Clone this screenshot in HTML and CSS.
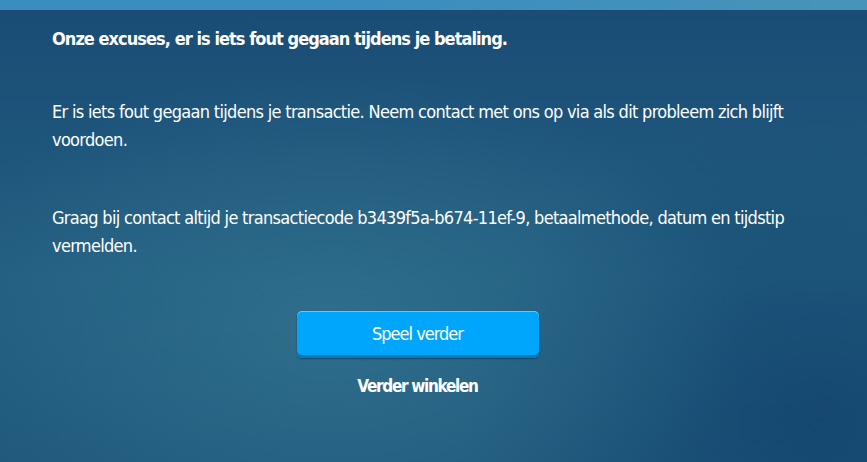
FILE: index.html
```html
<!DOCTYPE html>
<html lang="nl">
<head>
    <meta charset="UTF-8">
    <title>Betaling mislukt</title>
    <link rel="stylesheet" href="styles.css">
</head>
<body>
<div class="page">
    <div class="top-bar"></div>
    <div class="content">
        <h1 class="title">Onze excuses, er is iets fout gegaan tijdens je betaling.</h1>
        <p class="text">Er is iets fout gegaan tijdens je transactie. Neem contact met ons op via als dit probleem zich blijft voordoen.</p>
        <p class="text">Graag bij contact altijd je transactiecode b3439f5a-b674-11ef-9, betaalmethode, datum en tijdstip vermelden.</p>
        <div class="actions">
            <button class="btn-play">Speel verder</button>
            <a class="link-shop" href="#">Verder winkelen</a>
        </div>
    </div>
</div>
</body>
</html>
```

FILE: styles.css
```css
html, body {
    margin: 0;
    height: 100%;
}

body {
    font-family: "DejaVu Sans Condensed", "DejaVu Sans", sans-serif;
    color: #fff;
    background: #1a4d76;
}

.page {
    height: 100%;
    display: flex;
    flex-direction: column;
    background:
        radial-gradient(ellipse 420px 260px at 330px 330px, rgba(60, 125, 150, 0.55), rgba(60, 125, 150, 0) 100%),
        radial-gradient(ellipse 360px 300px at 820px 420px, rgba(15, 60, 105, 0.6), rgba(15, 60, 105, 0) 100%),
        linear-gradient(180deg, #1a4c75 0%, #215d80 60%, #1e587c 100%);
}

.top-bar {
    height: 10px;
    flex: 0 0 auto;
    background: linear-gradient(90deg, #3a8dbf 0%, #3a8dbf 40%, #4894b8 100%);
}

.content {
    padding: 15px 52px 0;
    display: flex;
    flex-direction: column;
}

.title {
    margin: 0 0 45px;
    font-size: 18px;
    line-height: 28px;
    font-weight: bold;
    letter-spacing: -0.95px;
}

.text {
    margin: 0 0 50px;
    font-size: 18px;
    line-height: 28px;
    letter-spacing: -0.69px;
}

.actions {
    display: flex;
    flex-direction: column;
    align-items: center;
    gap: 17px;
    margin-top: 1px;
    padding-right: 32px;
}

.btn-play {
    width: 242px;
    height: 47px;
    border: 0;
    border-radius: 5px;
    background: #00a6fc;
    box-shadow: inset 0 1px 0 #5ccaff, inset 0 -3px 0 #0a78b8, 0 1px 2px rgba(0, 20, 50, 0.4);
    color: #fff;
    font-family: inherit;
    font-size: 18px;
    letter-spacing: -1px;
    padding: 0 0 2px;
    cursor: pointer;
}

.link-shop {
    color: #fff;
    font-size: 17px;
    line-height: 22px;
    font-weight: bold;
    letter-spacing: -1.3px;
    text-decoration: none;
}
```
